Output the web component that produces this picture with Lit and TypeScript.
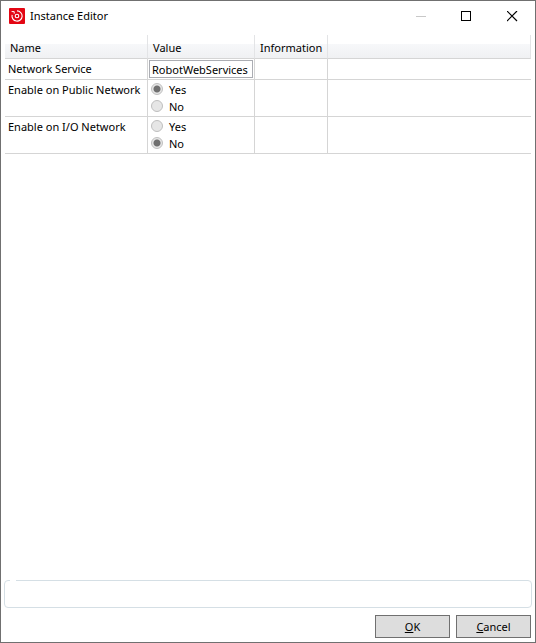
import { LitElement, html, css } from "lit";
import { customElement, property, state } from "lit/decorators.js";

interface NetworkSetting {
  id: string;
  label: string;
  enabled: boolean;
}

@customElement("title-bar")
class TitleBar extends LitElement {
  @property() heading = "";

  static styles = css`
    :host {
      display: flex;
      align-items: center;
      height: 30px;
      padding-left: 8px;
    }
    .logo {
      width: 16px;
      height: 16px;
      flex: none;
    }
    .heading {
      flex: 1;
      margin: 0 0 0 5px;
      font-size: 11px;
      font-weight: 400;
      line-height: 16px;
    }
    .caption {
      display: flex;
      align-items: center;
      justify-content: center;
      width: 46px;
      height: 30px;
      padding: 0;
      border: 0;
      background: none;
      color: #000;
    }
    .caption:disabled {
      color: #c8c8c8;
    }
    .caption svg {
      width: 11px;
      height: 11px;
      fill: none;
      stroke: currentColor;
    }
  `;

  render() {
    return html`
      <svg class="logo" viewBox="0 0 16 16" aria-hidden="true">
        <rect width="16" height="16" rx="1" fill="#e30613" />
        <path d="M8 2.9A5.1 5.1 0 1 1 3.1 6.8" fill="none" stroke="#fff" stroke-width="1.1" />
        <path d="M2.6 3.6h2.6v2" fill="none" stroke="#fff" stroke-width="1" />
        <circle cx="8" cy="8" r="1.8" fill="none" stroke="#fff" stroke-width="1.1" />
      </svg>
      <h1 class="heading">${this.heading}</h1>
      <button class="caption" aria-label="Minimize" disabled>
        <svg viewBox="0 0 11 11"><path d="M1 5.5h10" /></svg>
      </button>
      <button class="caption" aria-label="Maximize">
        <svg viewBox="0 0 11 11"><rect x="0.5" y="0.5" width="9" height="9" /></svg>
      </button>
      <button class="caption" aria-label="Close">
        <svg viewBox="0 0 11 11"><path d="M0 0l10 10M10 0l-10 10" stroke-width="1.2" /></svg>
      </button>
    `;
  }
}

@customElement("app-root")
class AppRoot extends LitElement {
  @state() private settings: NetworkSetting[] = [
    { id: "public", label: "Enable on Public Network", enabled: true },
    { id: "io", label: "Enable on I/O Network", enabled: false },
  ];

  static styles = css`
    :host {
      display: flex;
      flex-direction: column;
      box-sizing: border-box;
      min-height: 100vh;
      border: 1px solid #707070;
      background: #fff;
      color: #000;
      font-family: "Noto Sans", "Open Sans", sans-serif;
      font-size: 11px;
      line-height: 16px;
    }
    .content {
      flex: 1;
      padding: 4px 4px 0;
    }
    .grid {
      width: 100%;
      table-layout: fixed;
      border-spacing: 0;
    }
    .name-col {
      width: 143px;
    }
    .value-col {
      width: 107px;
    }
    .info-col {
      width: 73px;
    }
    th,
    td {
      box-sizing: border-box;
      border-right: 1px solid #d5d5d5;
      border-bottom: 1px solid #d5d5d5;
      white-space: nowrap;
      text-align: left;
      vertical-align: top;
      font-weight: 400;
    }
    th {
      height: 24px;
      padding: 5px 0 2px 5px;
      border-right-color: #e3e4e6;
      background: linear-gradient(#fff 0 9px, #f7f8fa 9px, #f0f1f3);
    }
    td {
      padding: 2px 0 0 3px;
    }
    td:last-child {
      border-right: 0;
    }
    .value {
      padding: 1px;
    }
    .text {
      display: block;
      box-sizing: border-box;
      width: 100%;
      height: 18px;
      padding: 0 0 0 2px;
      border: 1px solid #abadb3;
      background: #fff;
      color: inherit;
      font: inherit;
    }
    .choices {
      padding: 1px 0 1px 3px;
    }
    .choice {
      display: flex;
      align-items: center;
      gap: 6px;
      height: 17px;
    }
    .radio {
      appearance: none;
      width: 12px;
      height: 12px;
      margin: 0 0 1px;
      border: 1px solid #bfbfbf;
      border-radius: 50%;
      box-sizing: border-box;
      background: #e6e6e6;
    }
    .radio:checked {
      background: radial-gradient(circle, #707070 3px, #e6e6e6 4px);
    }
    .message {
      height: 28px;
      box-sizing: border-box;
      min-width: 0;
      margin: 0 3px;
      padding: 0 0 0 5px;
      border: 1px solid #d5dfe5;
      border-radius: 4px;
    }
    .legend {
      width: 6px;
      height: 1px;
      padding: 0;
    }
    .actions {
      display: flex;
      justify-content: flex-end;
      gap: 6px;
      padding: 7px 4px 4px;
    }
    .action {
      box-sizing: border-box;
      width: 75px;
      height: 23px;
      padding: 0;
      border: 1px solid #707070;
      background: #ddd;
      color: inherit;
      font: inherit;
    }
  `;

  private choice(setting: NetworkSetting, value: boolean) {
    return html`
      <label class="choice">
        <input
          class="radio"
          type="radio"
          name=${setting.id}
          .checked=${setting.enabled === value}
          disabled
        />${value ? "Yes" : "No"}
      </label>
    `;
  }

  render() {
    return html`
      <title-bar heading="Instance Editor"></title-bar>
      <main class="content">
        <table class="grid">
          <colgroup>
            <col class="name-col" />
            <col class="value-col" />
            <col class="info-col" />
            <col />
          </colgroup>
          <thead>
            <tr>
              <th>Name</th>
              <th>Value</th>
              <th>Information</th>
              <th></th>
            </tr>
          </thead>
          <tbody>
            <tr>
              <td><label for="service">Network Service</label></td>
              <td class="value">
                <input id="service" class="text" type="text" readonly .value=${"RobotWebServices"} />
              </td>
              <td></td>
              <td></td>
            </tr>
            ${this.settings.map(
              (setting) => html`
                <tr>
                  <td>${setting.label}</td>
                  <td class="choices">
                    <div role="radiogroup" aria-label=${setting.label}>
                      ${this.choice(setting, true)}${this.choice(setting, false)}
                    </div>
                  </td>
                  <td></td>
                  <td></td>
                </tr>
              `,
            )}
          </tbody>
        </table>
      </main>
      <fieldset class="message"><legend class="legend"></legend></fieldset>
      <footer class="actions">
        <button class="action"><u>O</u>K</button>
        <button class="action"><u>C</u>ancel</button>
      </footer>
    `;
  }
}
